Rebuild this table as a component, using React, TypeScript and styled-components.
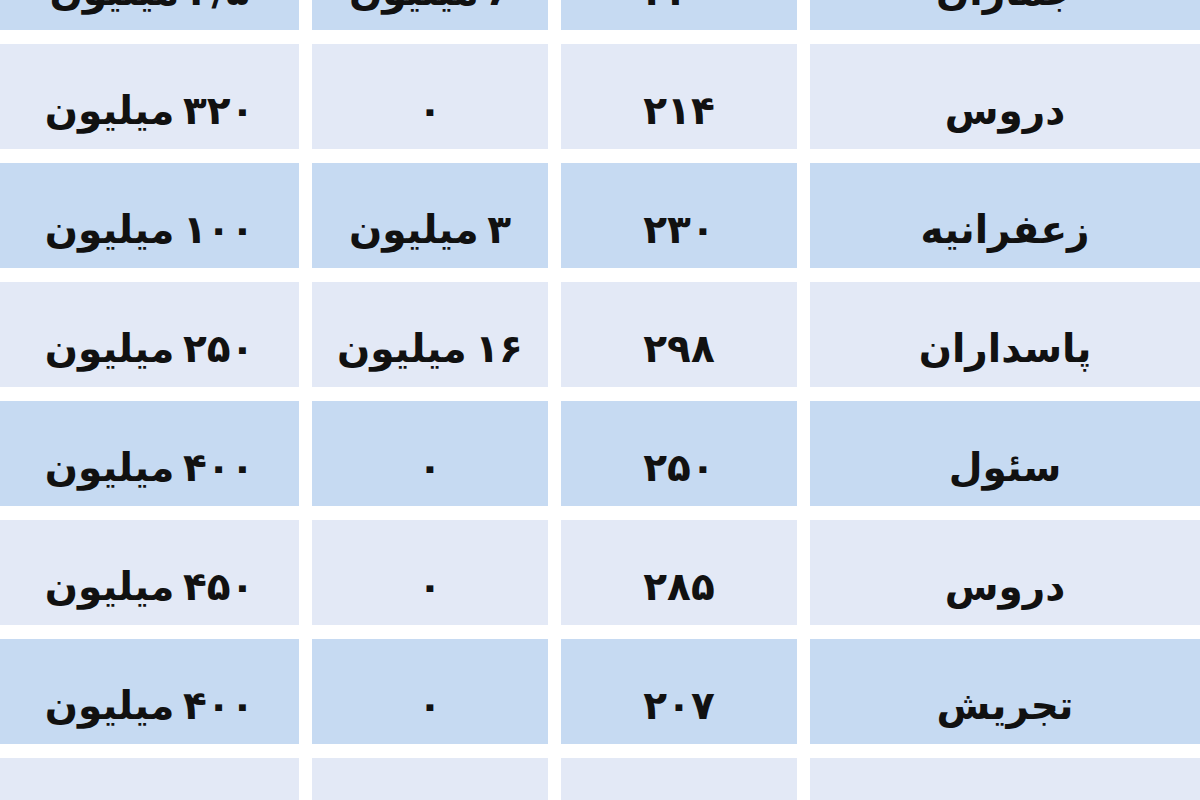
import styled, { createGlobalStyle } from "styled-components";

type Row = {
  district: string;
  area: string;
  loan: string;
  deposit: string;
};

const rows: Row[] = [
  { district: "جماران", area: "۲۲۰", loan: "۶ میلیون", deposit: "۳/۵ میلیون" },
  { district: "دروس", area: "۲۱۴", loan: "۰", deposit: "۳۲۰ میلیون" },
  { district: "زعفرانیه", area: "۲۳۰", loan: "۳ میلیون", deposit: "۱۰۰ میلیون" },
  { district: "پاسداران", area: "۲۹۸", loan: "۱۶ میلیون", deposit: "۲۵۰ میلیون" },
  { district: "سئول", area: "۲۵۰", loan: "۰", deposit: "۴۰۰ میلیون" },
  { district: "دروس", area: "۲۸۵", loan: "۰", deposit: "۴۵۰ میلیون" },
  { district: "تجریش", area: "۲۰۷", loan: "۰", deposit: "۴۰۰ میلیون" },
  { district: "فرمانیه", area: "۲۶۰", loan: "۰", deposit: "۵۰۰ میلیون" },
];

const GlobalStyle = createGlobalStyle`
  html, body {
    margin: 0;
    padding: 0;
    background: #ffffff;
  }
`;

// the table is scrolled a bit, so the first row is cut at the top
const Viewport = styled.div`
  width: 1200px;
  height: 800px;
  overflow: hidden;
  background: #ffffff;
`;

const Table = styled.div`
  direction: rtl;
  margin-top: -75px;
  display: grid;
  grid-template-columns: 390px 236px 236px 1fr;
  grid-auto-rows: 105px;
  column-gap: 13px;
  row-gap: 14px;
`;

const Cell = styled.div<{ $shade: "blue" | "light" }>`
  display: flex;
  align-items: center;
  justify-content: center;
  padding-top: 27px;
  box-sizing: border-box;
  background: ${({ $shade }) => ($shade === "blue" ? "#c6daf2" : "#e3e9f6")};
  color: #111111;
  font-family: "DejaVu Sans", "Noto Sans", sans-serif;
  font-weight: 700;
  font-size: 39px;
  word-spacing: -5px;
  white-space: nowrap;
`;

export default function App() {
  return (
    <>
      <GlobalStyle />
      <Viewport>
        <Table>
          {rows.map((row, i) => {
            const shade = i % 2 === 0 ? "blue" : "light";
            return [
              <Cell key={`d${i}`} $shade={shade}>{row.district}</Cell>,
              <Cell key={`a${i}`} $shade={shade}>{row.area}</Cell>,
              <Cell key={`l${i}`} $shade={shade}>{row.loan}</Cell>,
              <Cell key={`p${i}`} $shade={shade}>{row.deposit}</Cell>,
            ];
          })}
        </Table>
      </Viewport>
    </>
  );
}
